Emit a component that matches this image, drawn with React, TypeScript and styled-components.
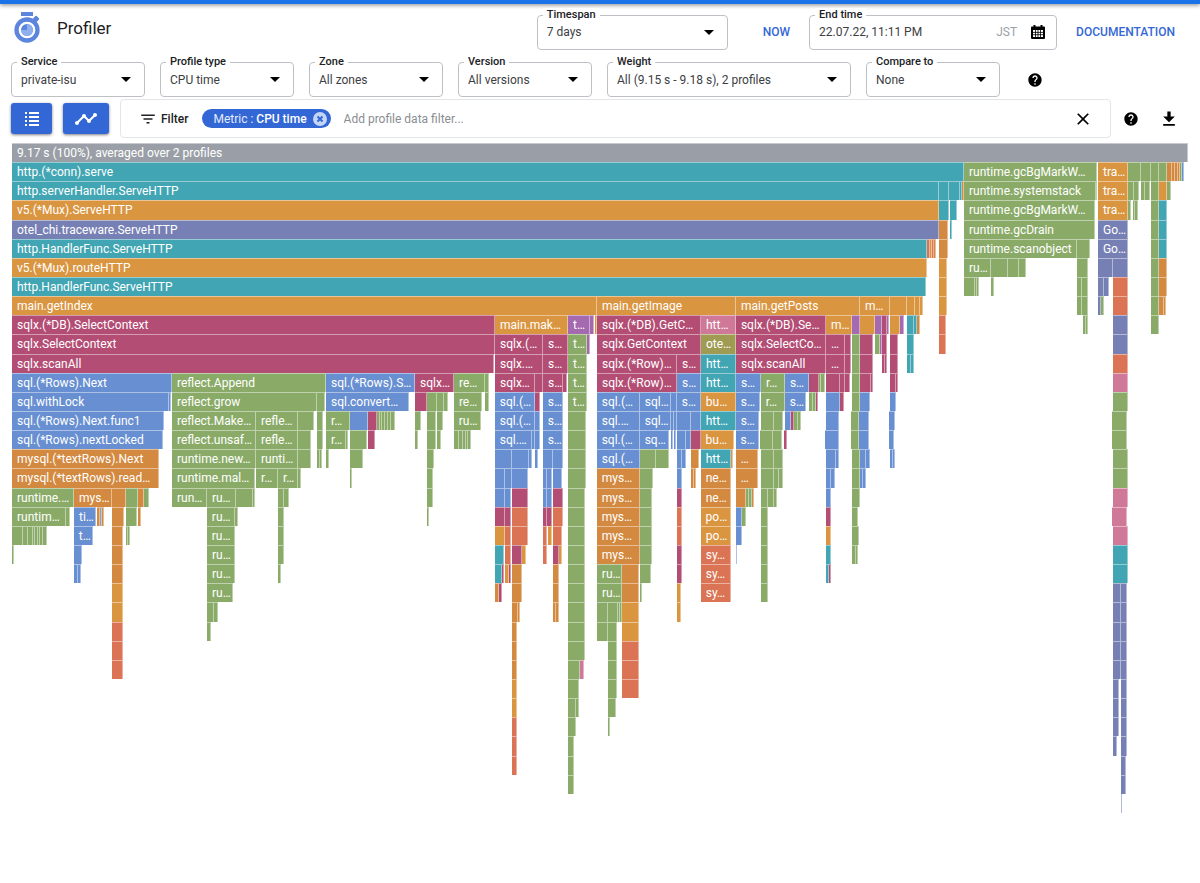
import React, { useId } from 'react';
import styled, { createGlobalStyle } from 'styled-components';

const GlobalStyle = createGlobalStyle`
  *, *::before, *::after { box-sizing: border-box; }
  body {
    margin: 0;
    background: #fff;
    color: #202124;
    font-family: Roboto, "Liberation Sans", sans-serif;
    font-size: 12px;
  }
  button, input, select { font: inherit; color: inherit; }
`;

/* ---------- palette ---------- */

const palette = {
  Y: '#9a9fa7',
  T: '#41a5b3',
  O: '#da9540',
  D: '#d3893f',
  I: '#7780b4',
  G: '#8aab68',
  C: '#b34d74',
  B: '#678fd2',
  R: '#da7454',
  P: '#d07897',
  V: '#a569af',
  L: '#9f9b53',
};

type Tone = keyof typeof palette;
type FrameData = [start: number, end: number, tone: Tone, label?: string];

/* ---------- flame graph data, one array per stack depth ---------- */

const DOMAIN_START = 12;
const DOMAIN_END = 1188;

const levels: FrameData[][] = [
  [[12, 1188, 'Y', '9.17 s (100%), averaged over 2 profiles']],
  [
    [12, 964, 'T', 'http.(*conn).serve'], [964, 1097, 'G', 'runtime.gcBgMarkW…'], [1098, 1128, 'O', 'tra…'],
    [1128, 1141, 'G'], [1141, 1151, 'G'], [1151, 1159, 'G'], [1159, 1167, 'G'], [1167, 1172, 'D'], [1172, 1175, 'D'],
    [1175, 1178, 'D'], [1178, 1180, 'D'], [1180, 1182, 'G'], [1182, 1184, 'B'],
  ],
  [
    [12, 939, 'T', 'http.serverHandler.ServeHTTP'], [939, 949, 'T'], [949, 960, 'T'], [960, 962, 'T'], [962, 964, 'D'],
    [964, 1096, 'G', 'runtime.systemstack'], [1096, 1097, 'G'], [1098, 1128, 'O', 'tra…'], [1128, 1134, 'G'],
    [1134, 1139, 'G'], [1141, 1145, 'G'], [1145, 1150, 'G'], [1151, 1159, 'G'], [1159, 1167, 'O'], [1167, 1171, 'G'],
  ],
  [
    [12, 939, 'O', 'v5.(*Mux).ServeHTTP'], [939, 949, 'T'], [950, 957, 'T'], [964, 1095, 'G', 'runtime.gcBgMarkW…'],
    [1098, 1128, 'O', 'tra…'], [1128, 1131, 'G'], [1133, 1135, 'G'], [1135, 1138, 'G'], [1151, 1159, 'G'], [1159, 1167, 'T'],
  ],
  [
    [12, 939, 'I', 'otel_chi.traceware.ServeHTTP'], [939, 948, 'D'], [950, 952, 'T'], [964, 1095, 'G', 'runtime.gcDrain'],
    [1098, 1128, 'I', 'Go…'], [1151, 1159, 'G'], [1159, 1167, 'T'],
  ],
  [
    [12, 927, 'T', 'http.HandlerFunc.ServeHTTP'], [927, 930, 'R'], [930, 932, 'O'], [932, 934, 'R'], [934, 936, 'D'],
    [939, 948, 'D'], [964, 1077, 'G', 'runtime.scanobject'], [1077, 1090, 'G'], [1098, 1128, 'I', 'Go…'],
    [1151, 1159, 'G'], [1159, 1167, 'T'],
  ],
  [
    [12, 927, 'O', 'v5.(*Mux).routeHTTP'], [939, 947, 'O'], [964, 991, 'G', 'ru…'], [991, 1008, 'G'], [1008, 1019, 'G'],
    [1019, 1026, 'G'], [1077, 1088, 'G'], [1098, 1113, 'I'], [1113, 1128, 'I'], [1151, 1159, 'G'], [1159, 1167, 'D'],
  ],
  [
    [12, 926, 'T', 'http.HandlerFunc.ServeHTTP'], [939, 947, 'O'], [964, 975, 'G'], [975, 977, 'G'], [977, 979, 'G'],
    [991, 994, 'G'], [1077, 1082, 'G'], [1082, 1088, 'G'], [1098, 1104, 'I'], [1104, 1109, 'I'], [1113, 1128, 'R'],
    [1151, 1159, 'G'], [1159, 1167, 'D'],
  ],
  [
    [12, 597, 'O', 'main.getIndex'], [597, 736, 'O', 'main.getImage'], [736, 860, 'O', 'main.getPosts'], [860, 890, 'O', 'm…'],
    [890, 907, 'O'], [907, 915, 'O'], [915, 920, 'O'], [920, 923, 'O'], [939, 947, 'O'], [1077, 1082, 'G'], [1082, 1088, 'G'],
    [1098, 1101, 'I'], [1101, 1104, 'G'], [1113, 1128, 'R'], [1151, 1159, 'G'], [1159, 1164, 'D'], [1164, 1166, 'D'],
  ],
  [
    [12, 495, 'C', 'sqlx.(*DB).SelectContext'], [495, 568, 'O', 'main.mak…'], [568, 590, 'V', 't…'], [590, 594, 'V'],
    [595, 597, 'O'], [597, 701, 'C', 'sqlx.(*DB).GetC…'], [701, 736, 'P', 'htt…'], [736, 826, 'C', 'sqlx.(*DB).Se…'],
    [826, 852, 'O', 'm…'], [852, 860, 'V'], [860, 875, 'O'], [875, 882, 'V'], [882, 887, 'C'], [887, 889, 'V'], [890, 900, 'O'],
    [900, 904, 'V'], [907, 914, 'T'], [914, 917, 'T'], [917, 920, 'D'], [939, 946, 'R'], [1083, 1086, 'G'], [1086, 1088, 'G'],
    [1113, 1128, 'I'], [1151, 1159, 'G'],
  ],
  [
    [12, 495, 'C', 'sqlx.SelectContext'], [495, 543, 'C', 'sqlx.(…'], [543, 568, 'C', 's…'], [568, 587, 'G', 't…'],
    [587, 590, 'V'], [597, 701, 'C', 'sqlx.GetContext'], [701, 736, 'L', 'ote…'], [736, 826, 'C', 'sqlx.SelectCo…'],
    [826, 845, 'C', '…'], [845, 851, 'C'], [852, 860, 'G'], [860, 873, 'C'], [875, 880, 'G'], [880, 882, 'V'], [882, 887, 'C'],
    [890, 898, 'C'], [907, 914, 'T'], [939, 946, 'R'], [1113, 1128, 'I'],
  ],
  [
    [12, 494, 'C', 'sqlx.scanAll'], [495, 543, 'C', 'sqlx.…'], [543, 568, 'C', 's…'], [568, 587, 'G', 't…'],
    [597, 677, 'C', 'sqlx.(*Row)…'], [677, 701, 'C', 's…'], [701, 736, 'T', 'htt…'], [736, 826, 'C', 'sqlx.scanAll'],
    [826, 845, 'C', '…'], [845, 851, 'C'], [852, 860, 'G'], [860, 873, 'C'], [882, 885, 'C'], [885, 887, 'C'], [890, 898, 'C'],
    [907, 911, 'T'], [911, 914, 'T'], [1113, 1128, 'R'],
  ],
  [
    [12, 172, 'B', 'sql.(*Rows).Next'], [172, 326, 'G', 'reflect.Append'], [326, 415, 'B', 'sql.(*Rows).S…'],
    [415, 454, 'C', 'sqlx…'], [454, 485, 'G', 're…'], [485, 489, 'G'], [495, 535, 'C', 'sqlx…'], [535, 543, 'C'],
    [543, 563, 'C', 's…'], [563, 567, 'C'], [568, 587, 'G', 't…'], [597, 677, 'C', 'sqlx.(*Row)…'], [677, 701, 'B', 's…'],
    [701, 736, 'T', 'htt…'], [736, 761, 'B', 's…'], [761, 785, 'G', 'r…'], [785, 809, 'B', 's…'], [809, 819, 'C'],
    [819, 821, 'G'], [821, 825, 'G'], [826, 840, 'C'], [840, 845, 'C'], [845, 850, 'C'], [852, 860, 'G'], [860, 871, 'C'],
    [871, 873, 'C'], [890, 896, 'C'], [896, 898, 'C'], [1113, 1128, 'P'],
  ],
  [
    [12, 169, 'B', 'sql.withLock'], [169, 171, 'B'], [172, 317, 'G', 'reflect.grow'], [317, 325, 'G'],
    [326, 409, 'B', 'sql.convert…'], [415, 427, 'C'], [427, 437, 'G'], [437, 444, 'G'], [444, 448, 'G'], [454, 482, 'G', 're…'],
    [485, 489, 'G'], [495, 535, 'B', 'sql.(…'], [535, 540, 'C'], [543, 563, 'B', 's…'], [568, 587, 'G', 't…'],
    [597, 640, 'B', 'sql.(…'], [640, 671, 'B', 'sql…'], [671, 677, 'B'], [677, 701, 'B', 's…'], [701, 736, 'O', 'bu…'],
    [736, 760, 'B', 's…'], [761, 785, 'G', 'r…'], [785, 806, 'B', 's…'], [809, 813, 'G'], [813, 816, 'G'], [816, 818, 'C'],
    [826, 840, 'B'], [840, 844, 'C'], [852, 860, 'G'], [860, 870, 'B'], [890, 896, 'B'], [1113, 1128, 'G'],
  ],
  [
    [12, 164, 'B', 'sql.(*Rows).Next.func1'], [172, 256, 'G', 'reflect.Make…'], [256, 298, 'G', 'refle…'], [298, 314, 'G'],
    [317, 323, 'G'], [326, 350, 'G', 'r…'], [350, 368, 'B'], [368, 377, 'C'], [377, 380, 'G'], [380, 382, 'G'], [382, 385, 'G'],
    [385, 388, 'G'], [388, 391, 'G'], [391, 395, 'G'], [415, 421, 'G'], [427, 436, 'G'], [437, 443, 'G'], [454, 481, 'G', 'ru…'],
    [495, 535, 'B', 'sql.(…'], [535, 540, 'B'], [543, 563, 'B', 's…'], [568, 586, 'G'], [597, 640, 'B', 'sql.…'],
    [640, 671, 'B', 'sql…'], [671, 674, 'B'], [674, 677, 'B'], [677, 691, 'B'], [691, 701, 'B'], [701, 736, 'T', 'htt…'],
    [736, 759, 'B', 's…'], [761, 774, 'G'], [774, 783, 'G'], [785, 791, 'B'], [791, 794, 'C'], [794, 798, 'G'], [798, 801, 'G'],
    [826, 840, 'B'], [852, 860, 'G'], [860, 870, 'B'], [890, 896, 'B'], [1113, 1128, 'G'],
  ],
  [
    [12, 163, 'B', 'sql.(*Rows).nextLocked'], [172, 256, 'G', 'reflect.unsaf…'], [256, 298, 'G', 'refle…'], [298, 311, 'G'],
    [317, 323, 'G'], [326, 346, 'G', 'r…'], [346, 348, 'G'], [350, 367, 'G'], [368, 375, 'C'], [415, 418, 'G'], [427, 436, 'G'],
    [437, 441, 'G'], [454, 459, 'G'], [459, 463, 'G'], [463, 466, 'G'], [466, 468, 'G'], [468, 471, 'G'],
    [495, 532, 'B', 'sql.…'], [532, 535, 'B'], [535, 540, 'B'], [543, 563, 'B', 's…'], [568, 586, 'G'], [597, 640, 'B', 'sql.(…'],
    [640, 669, 'B', 'sq…'], [671, 673, 'B'], [674, 676, 'B'], [677, 686, 'B'], [686, 691, 'B'], [691, 701, 'C'],
    [701, 734, 'O', 'bu…'], [736, 759, 'B', 's…'], [761, 774, 'G'], [774, 783, 'G'], [785, 788, 'C'], [826, 840, 'B'],
    [852, 860, 'G'], [860, 870, 'B'], [890, 895, 'B'], [1113, 1128, 'G'],
  ],
  [
    [12, 159, 'D', 'mysql.(*textRows).Next'], [172, 256, 'G', 'runtime.new…'], [256, 298, 'G', 'runti…'], [298, 311, 'G'],
    [317, 320, 'G'], [320, 322, 'G'], [326, 329, 'G'], [350, 363, 'G'], [427, 434, 'G'], [495, 512, 'B'], [512, 529, 'B'],
    [529, 532, 'B'], [535, 538, 'B'], [543, 553, 'B'], [553, 563, 'B'], [568, 586, 'G'], [597, 640, 'B', 'sql.(…'],
    [640, 656, 'G'], [656, 669, 'G'], [677, 682, 'B'], [682, 686, 'B'], [691, 699, 'D'], [701, 731, 'T', 'htt…'],
    [731, 733, 'O'], [736, 758, 'D', '…'], [761, 774, 'G'], [774, 783, 'G'], [826, 836, 'B'], [836, 839, 'B'], [852, 860, 'G'],
    [860, 866, 'B'], [866, 870, 'B'], [890, 893, 'B'], [893, 895, 'B'], [1113, 1128, 'G'],
  ],
  [
    [12, 159, 'D', 'mysql.(*textRows).read…'], [172, 255, 'G', 'runtime.mal…'], [256, 278, 'G', 'r…'], [278, 298, 'G', 'r…'],
    [298, 301, 'G'], [350, 352, 'G'], [427, 433, 'G'], [495, 505, 'B'], [505, 512, 'B'], [512, 528, 'B'], [543, 547, 'B'],
    [547, 552, 'B'], [553, 562, 'B'], [568, 586, 'G'], [597, 640, 'D', 'mys…'], [640, 653, 'G'], [677, 682, 'B'],
    [691, 694, 'D'], [694, 696, 'D'], [701, 731, 'D', 'ne…'], [736, 758, 'D', '…'], [761, 774, 'G'], [774, 779, 'G'],
    [779, 783, 'G'], [826, 831, 'B'], [831, 835, 'B'], [852, 860, 'G'], [860, 863, 'B'], [863, 866, 'B'], [1113, 1128, 'G'],
  ],
  [
    [12, 74, 'G', 'runtime.…'], [74, 112, 'D', 'mys…'], [112, 126, 'D'], [126, 138, 'G'], [138, 144, 'D'], [144, 149, 'G'],
    [172, 207, 'G', 'run…'], [207, 236, 'G', 'ru…'], [236, 253, 'G'], [253, 255, 'G'], [278, 284, 'G'], [284, 289, 'G'],
    [427, 433, 'G'], [495, 505, 'B'], [505, 511, 'B'], [512, 528, 'C'], [543, 547, 'B'], [547, 552, 'B'], [553, 563, 'C'],
    [568, 585, 'G'], [597, 640, 'D', 'mys…'], [640, 652, 'G'], [677, 682, 'C'], [701, 731, 'D', 'ne…'], [736, 746, 'D'],
    [746, 749, 'G'], [749, 752, 'G'], [752, 754, 'D'], [761, 768, 'G'], [768, 774, 'G'], [774, 777, 'G'], [826, 831, 'B'],
    [852, 860, 'G'], [1113, 1128, 'P'],
  ],
  [
    [12, 66, 'G', 'runtim…'], [66, 70, 'G'], [74, 96, 'B', 'ti…'], [97, 100, 'D'], [100, 102, 'Y'], [102, 104, 'D'],
    [112, 124, 'D'], [126, 137, 'G'], [138, 141, 'D'], [207, 235, 'G', 'ru…'], [235, 238, 'G'], [278, 284, 'G'],
    [427, 429, 'G'], [495, 505, 'C'], [505, 511, 'C'], [512, 528, 'R'], [543, 547, 'C'], [547, 552, 'C'], [553, 563, 'R'],
    [568, 585, 'G'], [597, 640, 'D', 'mys…'], [640, 652, 'G'], [677, 682, 'R'], [701, 731, 'O', 'po…'], [736, 742, 'B'],
    [742, 746, 'G'], [761, 768, 'G'], [826, 831, 'C'], [852, 859, 'G'], [1113, 1128, 'P'],
  ],
  [
    [12, 23, 'G'], [23, 28, 'G'], [28, 33, 'G'], [33, 35, 'G'], [35, 38, 'G'], [38, 40, 'G'], [40, 43, 'G'], [43, 47, 'G'],
    [74, 93, 'B', 't…'], [112, 123, 'D'], [126, 128, 'G'], [128, 130, 'G'], [207, 235, 'G', 'ru…'], [278, 284, 'G'],
    [495, 505, 'O'], [505, 511, 'R'], [512, 528, 'R'], [543, 547, 'R'], [548, 552, 'O'], [553, 562, 'R'], [568, 585, 'G'],
    [597, 640, 'D', 'mys…'], [640, 652, 'G'], [677, 682, 'R'], [701, 731, 'O', 'po…'], [736, 742, 'B'], [761, 768, 'G'],
    [826, 831, 'O'], [852, 859, 'G'], [1113, 1128, 'P'],
  ],
  [
    [12, 14, 'G'], [74, 82, 'B'], [112, 123, 'D'], [207, 235, 'G', 'ru…'], [278, 284, 'G'], [495, 504, 'T'], [505, 511, 'R'],
    [512, 522, 'C'], [522, 526, 'O'], [543, 547, 'R'], [553, 559, 'C'], [559, 562, 'O'], [568, 585, 'G'],
    [597, 640, 'D', 'mys…'], [640, 652, 'G'], [677, 682, 'C'], [701, 731, 'R', 'sy…'], [736, 737, 'B'], [761, 768, 'G'],
    [826, 831, 'T'], [852, 856, 'G'], [856, 858, 'G'], [1113, 1128, 'T'],
  ],
  [
    [74, 78, 'B'], [78, 81, 'B'], [112, 123, 'D'], [207, 235, 'G', 'ru…'], [278, 281, 'G'], [495, 502, 'T'], [502, 504, 'C'],
    [505, 509, 'O'], [509, 511, 'C'], [512, 522, 'D'], [553, 559, 'D'], [568, 585, 'G'], [597, 622, 'G', 'ru…'],
    [622, 639, 'D'], [640, 651, 'G'], [677, 682, 'C'], [701, 731, 'R', 'sy…'], [761, 768, 'G'], [826, 829, 'T'],
    [829, 831, 'C'], [1113, 1128, 'T'],
  ],
  [
    [112, 123, 'O'], [207, 233, 'G', 'ru…'], [495, 499, 'D'], [499, 502, 'C'], [512, 522, 'D'], [553, 559, 'D'],
    [568, 585, 'G'], [597, 622, 'G', 'ru…'], [622, 639, 'D'], [640, 642, 'G'], [677, 681, 'O'], [701, 731, 'R', 'sy…'],
    [761, 768, 'G'], [1113, 1121, 'I'], [1121, 1127, 'I'],
  ],
  [
    [112, 123, 'O'], [207, 214, 'G'], [214, 218, 'G'], [512, 518, 'D'], [518, 520, 'D'], [553, 556, 'D'], [556, 559, 'D'],
    [568, 585, 'G'], [597, 608, 'G'], [608, 618, 'G'], [618, 620, 'G'], [620, 622, 'G'], [622, 639, 'O'], [677, 681, 'O'],
    [1113, 1121, 'I'], [1121, 1127, 'I'],
  ],
  [
    [112, 123, 'R'], [207, 211, 'G'], [512, 517, 'D'], [568, 585, 'G'], [597, 608, 'G'], [608, 617, 'G'], [622, 639, 'O'],
    [1113, 1121, 'I'], [1121, 1127, 'I'],
  ],
  [
    [112, 123, 'R'], [512, 517, 'D'], [568, 585, 'G'], [608, 617, 'G'], [622, 639, 'R'], [1113, 1121, 'I'], [1121, 1127, 'I'],
  ],
  [
    [112, 123, 'R'], [512, 517, 'D'], [568, 580, 'G'], [580, 584, 'P'], [608, 617, 'G'], [622, 639, 'R'],
    [1113, 1121, 'I'], [1121, 1127, 'I'],
  ],
  [[512, 517, 'O'], [568, 579, 'G'], [608, 617, 'G'], [622, 639, 'R'], [1113, 1119, 'I'], [1121, 1127, 'I']],
  [[512, 517, 'O'], [568, 576, 'G'], [576, 579, 'G'], [608, 616, 'G'], [1113, 1119, 'I'], [1121, 1127, 'I']],
  [[512, 517, 'R'], [568, 576, 'G'], [608, 610, 'G'], [1113, 1119, 'I'], [1121, 1127, 'I']],
  [[512, 517, 'R'], [568, 574, 'G'], [1113, 1117, 'I'], [1121, 1127, 'I']],
  [[512, 517, 'R'], [568, 574, 'G'], [1121, 1126, 'I']],
  [[568, 574, 'G'], [1121, 1126, 'I']],
  [[1121, 1122, 'I']],
];

const share = (units: number) => `${(units / (DOMAIN_END - DOMAIN_START)) * 100}%`;

/* ---------- icons ---------- */

const Glyph = styled.svg<{ $size?: number }>`
  display: block;
  flex: none;
  width: ${(p) => p.$size ?? 20}px;
  height: ${(p) => p.$size ?? 20}px;
  fill: currentColor;
`;

const HelpIcon = () => (
  <Glyph $size={16} viewBox="0 0 24 24" aria-hidden="true">
    <path d="M12 2C6.48 2 2 6.48 2 12s4.48 10 10 10 10-4.48 10-10S17.52 2 12 2zm1 17h-2v-2h2v2zm2.07-7.75l-.9.92C13.45 12.9 13 13.5 13 15h-2v-.5c0-1.1.45-2.1 1.17-2.83l1.24-1.26c.37-.36.59-.86.59-1.41 0-1.1-.9-2-2-2s-2 .9-2 2H8c0-2.21 1.79-4 4-4s4 1.79 4 4c0 .88-.36 1.68-.93 2.25z" />
  </Glyph>
);

const CloseIcon = () => (
  <Glyph viewBox="0 0 24 24" aria-hidden="true">
    <path d="M19 6.41L17.59 5 12 10.59 6.41 5 5 6.41 10.59 12 5 17.59 6.41 19 12 13.41 17.59 19 19 17.59 13.41 12z" />
  </Glyph>
);

const DownloadIcon = () => (
  <Glyph viewBox="0 0 24 24" aria-hidden="true">
    <path d="M19 9h-5V3h-4v6H5l7 7 7-7zM5 18v2h14v-2H5z" />
  </Glyph>
);

const FilterIcon = () => (
  <Glyph $size={18} viewBox="0 0 24 24" aria-hidden="true">
    <path d="M10 18h4v-2h-4v2zM3 6v2h18V6H3zm3 7h12v-2H6v2z" />
  </Glyph>
);

const ListIcon = () => (
  <Glyph $size={14} viewBox="0 0 14 14" aria-hidden="true">
    <path d="M0 0h2v2H0zM4 0h10v2H4zM0 4h2v2H0zM4 4h10v2H4zM0 8h2v2H0zM4 8h10v2H4zM0 12h2v2H0zM4 12h10v2H4z" />
  </Glyph>
);

const TimelineIcon = () => (
  <Glyph $size={24} viewBox="0 0 24 24" aria-hidden="true">
    <path d="M23 8c0 1.1-.9 2-2 2-.18 0-.35-.02-.51-.07l-3.56 3.55c.05.16.07.34.07.52 0 1.1-.9 2-2 2s-2-.9-2-2c0-.18.02-.36.07-.52l-2.55-2.55c-.16.05-.34.07-.52.07s-.36-.02-.52-.07l-4.55 4.56c.05.16.07.33.07.51 0 1.1-.9 2-2 2s-2-.9-2-2 .9-2 2-2c.18 0 .35.02.51.07l4.56-4.55C8.02 9.36 8 9.18 8 9c0-1.1.9-2 2-2s2 .9 2 2c0 .18-.02.36-.07.52l2.55 2.55c.16-.05.34-.07.52-.07s.36.02.52.07l3.55-3.56C19.02 8.35 19 8.18 19 8c0-1.1.9-2 2-2s2 .9 2 2z" />
  </Glyph>
);

const CalendarIcon = () => (
  <Glyph $size={14} viewBox="0 0 14 14" aria-hidden="true">
    <path
      fillRule="evenodd"
      d="M2.500 0H4.500V1.500H9.500V0H11.500V1.500H13a1 1 0 0 1 1 1V13a1 1 0 0 1-1 1H1a1 1 0 0 1-1-1V2.500a1 1 0 0 1 1-1H2.500zM2 5v7h10V5z"
    />
    <path d="M2 7.400h10M2 9.700h10M4.500 5v7M7 5v7M9.500 5v7" stroke="currentColor" strokeWidth="0.8" />
  </Glyph>
);

const ChipRemoveIcon = () => (
  <Glyph $size={14} viewBox="0 0 14 14" aria-hidden="true">
    <circle cx="7" cy="7" r="7" fill="#c5d5f6" />
    <path d="M4.500 4.500l5 5M9.500 4.500l-5 5" stroke="#3367d6" strokeWidth="2" />
  </Glyph>
);

const LogoMark = styled.svg`
  display: block;
  width: 28px;
  height: 32px;
`;

const ProfilerLogo = () => (
  <LogoMark viewBox="0 0 28 32" aria-hidden="true">
    <rect x="8" y="0" width="12" height="4" fill="#5c85de" />
    <rect x="-1" y="-2.500" width="5" height="5" rx="1" fill="#5c85de" transform="translate(22 8) rotate(-45)" />
    <circle cx="14" cy="18" r="10.500" fill="none" stroke="#5c85de" strokeWidth="4.300" />
    <circle cx="14" cy="18" r="6" fill="#5c85de" />
    <path d="M14 18V12a6 6 0 1 1-6 6z" fill="#8fb0ee" />
  </LogoMark>
);

/* ---------- outlined fields ---------- */

const FieldBox = styled.div<{ $width: number }>`
  position: relative;
  display: flex;
  align-items: center;
  flex: 0 1 ${(p) => p.$width}px;
  min-width: 0;
  height: 35px;
  border: 1px solid #bdc1c6;
  border-radius: 4px;
`;

const FieldLabel = styled.label`
  position: absolute;
  top: -8px;
  left: 5px;
  padding: 0 4px;
  background: #fff;
  color: #202124;
  font-size: 11px;
  font-weight: 500;
  line-height: 14px;
  white-space: nowrap;
`;

const SelectControl = styled.select`
  appearance: none;
  flex: 1;
  min-width: 0;
  height: 100%;
  padding: 0 24px 0 9px;
  border: 0;
  background: transparent;
  color: #3c4043;
`;

const Caret = styled.svg`
  position: absolute;
  right: 13px;
  top: 14px;
  width: 10px;
  height: 5px;
  pointer-events: none;
`;

const TextControl = styled.input`
  flex: 1;
  min-width: 0;
  height: 100%;
  padding: 0 0 0 9px;
  border: 0;
  background: transparent;
  color: #3c4043;
`;

const FieldSuffix = styled.span`
  padding: 0 14px 0 8px;
  color: #9aa0a6;
`;

const IconButton = styled.button`
  display: grid;
  place-items: center;
  flex: none;
  padding: 0;
  border: 0;
  background: transparent;
  color: #000;
`;

const CalendarButton = styled(IconButton)`
  margin-right: 11px;
`;

function SelectField({ label, value, width }: { label: string; value: string; width: number }) {
  const id = useId();
  return (
    <FieldBox $width={width}>
      <FieldLabel htmlFor={id}>{label}</FieldLabel>
      <SelectControl id={id} defaultValue={value}>
        <option>{value}</option>
      </SelectControl>
      <Caret viewBox="0 0 10 5" aria-hidden="true">
        <path d="M0 0h10L5 5z" />
      </Caret>
    </FieldBox>
  );
}

/* ---------- page ---------- */

const Page = styled.div`
  min-height: 100vh;
`;

const TopStrip = styled.div`
  height: 4px;
  background: #1a73e8;
  box-shadow: 0 1px 4px rgba(0, 0, 0, 0.5);
`;

const TitleBar = styled.header`
  display: flex;
  align-items: center;
  height: 56px;
  padding: 0 25px 0 13px;
`;

const Brand = styled.div`
  display: flex;
  align-items: center;
  flex: 1;
  gap: 16px;
  padding-bottom: 9px;
`;

const Title = styled.h1`
  margin: 0;
  color: #202124;
  font-size: 17px;
  font-weight: 400;
  line-height: 24px;
`;

const NowButton = styled.button`
  flex: none;
  margin: 0 19px 0 35px;
  padding: 0;
  border: 0;
  background: transparent;
  color: #3367d6;
  font-weight: 500;
`;

const DocLink = styled.a`
  flex: none;
  margin-left: 19px;
  color: #3367d6;
  font-weight: 500;
  text-decoration: none;
`;

const OptionsBar = styled.div`
  display: flex;
  align-items: center;
  gap: 15px;
  padding: 2px 24px 0 11px;
`;

const OptionsHelp = styled(IconButton)`
  margin-left: 12px;
`;

const FilterRow = styled.div`
  display: flex;
  align-items: center;
  gap: 11px;
  padding: 2px 21px 5px 11px;
`;

const ModeButton = styled.button<{ $width: number }>`
  display: grid;
  place-items: center;
  flex: none;
  width: ${(p) => p.$width}px;
  height: 31px;
  padding: 0;
  border: 0;
  border-radius: 3px;
  background: #3367d6;
  box-shadow: 0 1px 3px rgba(0, 0, 0, 0.5);
  color: #fff;
`;

const FilterBox = styled.div`
  display: flex;
  align-items: center;
  flex: 1;
  min-width: 0;
  height: 39px;
  padding: 0 17px 0 18px;
  border: 1px solid #e4e5e7;
  border-radius: 4px;
`;

const FilterLabel = styled.label`
  margin: 0 14px 0 4px;
  color: #202124;
  font-weight: 500;
`;

const Chip = styled.span`
  display: flex;
  align-items: center;
  flex: none;
  gap: 6px;
  height: 19px;
  padding: 0 4px 0 11px;
  border-radius: 10px;
  background: #3367d6;
  color: #e3ebfb;
  white-space: nowrap;
`;

const ChipValue = styled.b`
  color: #fff;
  font-weight: 500;
`;

const FilterInput = styled.input`
  flex: 1;
  min-width: 0;
  height: 30px;
  padding: 0 13px;
  border: 0;
  background: transparent;

  &::placeholder { color: #8a8d91; opacity: 1; }
`;

const RowActions = styled.div`
  display: flex;
  align-items: center;
  gap: 20px;
  padding-left: 1px;
`;

/* ---------- flame graph ---------- */

const Flame = styled.main`
  display: grid;
  grid-template-rows: repeat(${levels.length}, 1fr);
  height: 670px;
  margin: 0 12px;
`;

const Level = styled.div`
  display: flex;
  min-height: 0;
`;

const Frame = styled.div<{ $tone: Tone }>`
  flex: none;
  padding-left: 5px;
  border: solid rgba(255, 255, 255, 0.45);
  border-width: 1px 1px 0 0;
  background: ${(p) => palette[p.$tone]};
  color: #fff;
  line-height: 18px;
  white-space: nowrap;
  overflow: hidden;
`;

const Sliver = styled(Frame)`
  padding: 0;
`;

function FlameLevel({ frames }: { frames: FrameData[] }) {
  return (
    <Level>
      {frames.map(([start, end, tone, label], i) => {
        const previousEnd = i === 0 ? DOMAIN_START : frames[i - 1][1];
        const box = { width: share(end - start), marginLeft: share(start - previousEnd) };
        return label ? (
          <Frame key={start} $tone={tone} style={box}>{label}</Frame>
        ) : (
          <Sliver key={start} $tone={tone} style={box} />
        );
      })}
    </Level>
  );
}

export default function App() {
  return (
    <Page>
      <GlobalStyle />
      <TopStrip />
      <TitleBar>
        <Brand>
          <ProfilerLogo />
          <Title>Profiler</Title>
        </Brand>
        <SelectField label="Timespan" value="7 days" width={191} />
        <NowButton type="button">NOW</NowButton>
        <FieldBox $width={248}>
          <FieldLabel htmlFor="end-time">End time</FieldLabel>
          <TextControl id="end-time" defaultValue="22.07.22, 11:11 PM" />
          <FieldSuffix>JST</FieldSuffix>
          <CalendarButton type="button" aria-label="Pick a date"><CalendarIcon /></CalendarButton>
        </FieldBox>
        <DocLink href="#documentation">DOCUMENTATION</DocLink>
      </TitleBar>

      <OptionsBar>
        <SelectField label="Service" value="private-isu" width={134} />
        <SelectField label="Profile type" value="CPU time" width={134} />
        <SelectField label="Zone" value="All zones" width={134} />
        <SelectField label="Version" value="All versions" width={134} />
        <SelectField label="Weight" value="All (9.15 s - 9.18 s), 2 profiles" width={244} />
        <SelectField label="Compare to" value="None" width={134} />
        <OptionsHelp type="button" aria-label="Help with options"><HelpIcon /></OptionsHelp>
      </OptionsBar>

      <FilterRow>
        <ModeButton type="button" $width={41} aria-label="Function list"><ListIcon /></ModeButton>
        <ModeButton type="button" $width={46} aria-label="History"><TimelineIcon /></ModeButton>
        <FilterBox>
          <FilterIcon />
          <FilterLabel htmlFor="profile-filter">Filter</FilterLabel>
          <Chip>
            <span>Metric : <ChipValue>CPU time</ChipValue></span>
            <IconButton type="button" aria-label="Remove metric filter"><ChipRemoveIcon /></IconButton>
          </Chip>
          <FilterInput id="profile-filter" type="text" placeholder="Add profile data filter..." />
          <IconButton type="button" aria-label="Clear filters"><CloseIcon /></IconButton>
        </FilterBox>
        <RowActions>
          <IconButton type="button" aria-label="Help with filters"><HelpIcon /></IconButton>
          <IconButton type="button" aria-label="Download profile"><DownloadIcon /></IconButton>
        </RowActions>
      </FilterRow>

      <Flame aria-label="Flame graph">
        {levels.map((frames, depth) => (
          <FlameLevel key={depth} frames={frames} />
        ))}
      </Flame>
    </Page>
  );
}
